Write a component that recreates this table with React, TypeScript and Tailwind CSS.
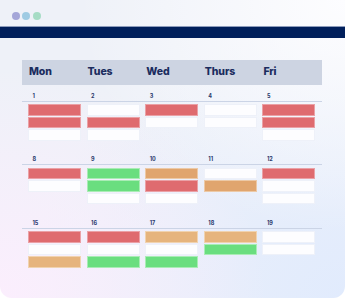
import React from "react";

type C = "r" | "g" | "o" | "p" | "w";

const colorClass: Record<C, string> = {
  r: "bg-[#df6b6f] shadow-[0_0_0_1px_#eaa1a6]",
  g: "bg-[#6ade7f] shadow-[0_0_0_1px_#a9ecb5]",
  o: "bg-[#e0a56e] shadow-[0_0_0_1px_#ecc9a6]",
  p: "bg-[#e6b47d] shadow-[0_0_0_1px_#f0d3b0]",
  w: "bg-[#fdfdff] shadow-[0_0_0_1px_#eef1f9]",
};

const weeks: { dates: string[]; bars: C[][] }[] = [
  {
    dates: ["1", "2", "3", "4", "5"],
    bars: [["r", "r", "w"], ["w", "r", "w"], ["r", "w"], ["w", "w"], ["r", "r", "w"]],
  },
  {
    dates: ["8", "9", "10", "11", "12"],
    bars: [["r", "w"], ["g", "g", "w"], ["o", "r", "w"], ["w", "o"], ["r", "w", "w"]],
  },
  {
    dates: ["15", "16", "17", "18", "19"],
    bars: [["r", "w", "p"], ["r", "w", "g"], ["p", "w", "g"], ["p", "g"], ["w", "w"]],
  },
];

const days = ["Mon", "Tues", "Wed", "Thurs", "Fri"];

export default function App() {
  return (
    <div className="w-[345px] h-[298px] bg-white">
      <div
        className="w-[345px] h-[298px] rounded-b-[12px] overflow-hidden bg-[#eef1f8] bg-[image:radial-gradient(ellipse_at_100%_0%,#fdfdff_0%,rgba(253,253,255,0)_55%),radial-gradient(ellipse_at_0%_100%,#fbeefd_0%,rgba(251,238,253,0)_55%),radial-gradient(ellipse_at_100%_100%,#e1ebfd_0%,rgba(225,235,253,0)_65%)] flex flex-col"
        style={{ fontFamily: "Inter, 'Open Sans', sans-serif" }}
      >
        <div className="flex gap-[2.5px] pl-[11.5px] pt-[11.5px]">
          <div className="w-[8px] h-[8px] rounded-full bg-[#a4a6d8]" />
          <div className="w-[8px] h-[8px] rounded-full bg-[#9fcbe3]" />
          <div className="w-[8px] h-[8px] rounded-full bg-[#a6dcc5]" />
        </div>
        <div className="mt-[6.5px] h-[11.5px] w-full bg-[#001f5b] border-t border-[#8d9cbc]" />

        <div className="ml-[22px] mt-[22px] w-[300px]">
          <div className="h-[25px] bg-[#cdd4e2] grid grid-cols-5 pl-[7px] items-center">
            {days.map((d) => (
              <div key={d} className="text-[10.5px] font-extrabold text-[#1b2c5e] leading-none tracking-[-0.1px]">
                {d}
              </div>
            ))}
          </div>

          {weeks.map((w, wi) => (
            <div key={wi} className="h-[63.5px] flex flex-col">
              <div className="h-[17px] border-b border-[#cbd4e6] grid grid-cols-5 pl-[7px] items-end pb-[2px]">
                {w.dates.map((d) => (
                  <div key={d} className="pl-[3.5px] text-[5.5px] font-bold text-[#2a3a6c] leading-[6px]">
                    {d}
                  </div>
                ))}
              </div>
              <div className="grid grid-cols-5 pl-[7px] pt-[3.5px] items-start">
                {w.bars.map((col, ci) => (
                  <div key={ci} className="flex flex-col gap-[3px]">
                    {col.map((c, bi) => (
                      <div key={bi} className={`w-[51px] h-[9.5px] ${colorClass[c]}`} />
                    ))}
                  </div>
                ))}
              </div>
            </div>
          ))}
        </div>
      </div>
    </div>
  );
}
